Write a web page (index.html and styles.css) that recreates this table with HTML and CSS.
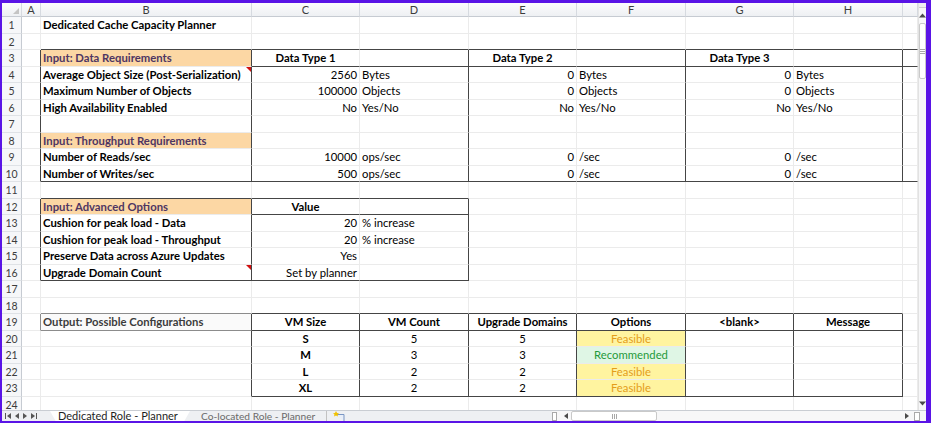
FILE: index.html
```
<!DOCTYPE html>
<html>
<head>
<meta charset="utf-8">
<title>Dedicated Cache Capacity Planner</title>
<link rel="stylesheet" href="styles.css">
</head>
<body>
<div class="frame">
<div class="excel">
  <div class="main">
    <div class="sheet">
      <table class="grid">
        <colgroup>
          <col class="w-rh"><col class="w-a"><col class="w-b"><col class="w-c"><col class="w-d"><col class="w-c"><col class="w-d"><col class="w-c"><col class="w-d"><col class="w-i">
        </colgroup>
        <thead>
          <tr class="hdr">
            <th class="corner"><svg width="6" height="6" viewBox="0 0 6 6"><polygon points="6,0 6,6 0,6" fill="#c4c4c4"/></svg></th>
            <th>A</th><th>B</th><th>C</th><th>D</th><th>E</th><th>F</th><th>G</th><th>H</th><th></th>
          </tr>
        </thead>
        <tbody>
          <tr><td class="rh">1</td><td></td><td class="bold">Dedicated Cache Capacity Planner</td><td></td><td></td><td></td><td></td><td></td><td></td><td></td></tr>
          <tr><td class="rh">2</td><td></td><td class="b"></td><td class="b"></td><td class="b"></td><td class="b"></td><td class="b"></td><td class="b"></td><td class="b"></td><td class="b"></td></tr>
          <tr><td class="rh">3</td><td class="r"></td><td class="r inp">Input: Data Requirements</td><td class="b ctr bold">Data Type 1</td><td class="b r"></td><td class="b ctr bold">Data Type 2</td><td class="b r"></td><td class="b ctr bold">Data Type 3</td><td class="b r"></td><td class="b"></td></tr>
          <tr><td class="rh">4</td><td class="r"></td><td class="r bold note-cell">Average Object Size (Post-Serialization)<span class="note"></span></td><td class="num">2560</td><td class="r">Bytes</td><td class="num">0</td><td class="r">Bytes</td><td class="num">0</td><td class="r">Bytes</td><td></td></tr>
          <tr><td class="rh">5</td><td class="r"></td><td class="r bold">Maximum Number of Objects</td><td class="num">100000</td><td class="r">Objects</td><td class="num">0</td><td class="r">Objects</td><td class="num">0</td><td class="r">Objects</td><td></td></tr>
          <tr><td class="rh">6</td><td class="r"></td><td class="r bold">High Availability Enabled</td><td class="num">No</td><td class="r">Yes/No</td><td class="num">No</td><td class="r">Yes/No</td><td class="num">No</td><td class="r">Yes/No</td><td></td></tr>
          <tr><td class="rh">7</td><td class="r"></td><td class="r"></td><td></td><td class="r"></td><td></td><td class="r"></td><td></td><td class="r"></td><td></td></tr>
          <tr><td class="rh">8</td><td class="r"></td><td class="r inp">Input: Throughput Requirements</td><td></td><td class="r"></td><td></td><td class="r"></td><td></td><td class="r"></td><td></td></tr>
          <tr><td class="rh">9</td><td class="r"></td><td class="r bold">Number of Reads/sec</td><td class="num">10000</td><td class="r">ops/sec</td><td class="num">0</td><td class="r">/sec</td><td class="num">0</td><td class="r">/sec</td><td></td></tr>
          <tr><td class="rh">10</td><td class="r"></td><td class="r b bold">Number of Writes/sec</td><td class="b num">500</td><td class="b r">ops/sec</td><td class="b num">0</td><td class="b r">/sec</td><td class="b num">0</td><td class="b r">/sec</td><td class="b"></td></tr>
          <tr><td class="rh">11</td><td></td><td class="b"></td><td class="b"></td><td class="b"></td><td></td><td></td><td></td><td></td><td></td></tr>
          <tr><td class="rh">12</td><td class="r"></td><td class="r inp">Input: Advanced Options</td><td class="b ctr bold">Value</td><td class="b r"></td><td></td><td></td><td></td><td></td><td></td></tr>
          <tr><td class="rh">13</td><td class="r"></td><td class="r bold">Cushion for peak load - Data</td><td class="num">20</td><td class="r">% increase</td><td></td><td></td><td></td><td></td><td></td></tr>
          <tr><td class="rh">14</td><td class="r"></td><td class="r bold">Cushion for peak load - Throughput</td><td class="num">20</td><td class="r">% increase</td><td></td><td></td><td></td><td></td><td></td></tr>
          <tr><td class="rh">15</td><td class="r"></td><td class="r bold">Preserve Data across Azure Updates</td><td class="num">Yes</td><td class="r"></td><td></td><td></td><td></td><td></td><td></td></tr>
          <tr><td class="rh">16</td><td class="r"></td><td class="r b bold note-cell">Upgrade Domain Count<span class="note"></span></td><td class="b num">Set by planner</td><td class="b r"></td><td></td><td></td><td></td><td></td><td></td></tr>
          <tr><td class="rh">17</td><td></td><td></td><td></td><td></td><td></td><td></td><td></td><td></td><td></td></tr>
          <tr><td class="rh">18</td><td></td><td class="bg"></td><td class="b"></td><td class="b"></td><td class="b"></td><td class="b"></td><td class="b"></td><td class="b"></td><td></td></tr>
          <tr><td class="rh">19</td><td class="rg"></td><td class="bg r out">Output: Possible Configurations</td><td class="b r ctr bold">VM Size</td><td class="b r ctr bold">VM Count</td><td class="b r ctr bold">Upgrade Domains</td><td class="b r ctr bold">Options</td><td class="b r ctr bold">&lt;blank&gt;</td><td class="b r ctr bold">Message</td><td></td></tr>
          <tr><td class="rh">20</td><td></td><td class="r"></td><td class="r ctr bold">S</td><td class="r ctr">5</td><td class="r ctr">5</td><td class="r ctr feas">Feasible</td><td class="r"></td><td class="r"></td><td></td></tr>
          <tr><td class="rh">21</td><td></td><td class="r"></td><td class="r ctr bold">M</td><td class="r ctr">3</td><td class="r ctr">3</td><td class="r ctr rec">Recommended</td><td class="r"></td><td class="r"></td><td></td></tr>
          <tr><td class="rh">22</td><td></td><td class="r"></td><td class="r ctr bold">L</td><td class="r ctr">2</td><td class="r ctr">2</td><td class="r ctr feas">Feasible</td><td class="r"></td><td class="r"></td><td></td></tr>
          <tr><td class="rh">23</td><td></td><td class="r"></td><td class="b r ctr bold">XL</td><td class="b r ctr">2</td><td class="b r ctr">2</td><td class="b r ctr feas">Feasible</td><td class="b r"></td><td class="b r"></td><td></td></tr>
          <tr><td class="rh">24</td><td></td><td></td><td></td><td></td><td></td><td></td><td></td><td></td><td></td></tr>
        </tbody>
      </table>
    </div>
    <div class="vscroll">
      <div class="vsplit"></div>
      <div class="varrow"><svg width="7" height="5" viewBox="0 0 7 5"><polygon points="3.5,0.5 7,4.5 0,4.5" fill="#4a4a4a"/></svg></div>
      <div class="vthumb"><svg width="5" height="5" viewBox="0 0 5 5"><path d="M0 0.5H5M0 2.5H5M0 4.5H5" stroke="#a8a8a8" stroke-width="1"/></svg></div>
      <div class="vtrack"></div>
      <div class="varrow down"><svg width="7" height="5" viewBox="0 0 7 5"><polygon points="0,0.5 7,0.5 3.5,4.5" fill="#4a4a4a"/></svg></div>
    </div>
  </div>
  <div class="tabbar">
    <div class="nav">
      <svg width="6" height="6" viewBox="0 0 6 6"><rect x="0" y="0" width="1" height="6" fill="#555"/><polygon points="6,0 6,6 2,3" fill="#555"/></svg>
      <svg width="4" height="6" viewBox="0 0 4 6"><polygon points="4,0 4,6 0,3" fill="#555"/></svg>
      <svg width="4" height="6" viewBox="0 0 4 6"><polygon points="0,0 0,6 4,3" fill="#555"/></svg>
      <svg width="6" height="6" viewBox="0 0 6 6"><polygon points="0,0 0,6 4,3" fill="#555"/><rect x="5" y="0" width="1" height="6" fill="#555"/></svg>
    </div>
    <div class="tab active">Dedicated Role - Planner</div>
    <div class="tab other">Co-located Role - Planner</div>
    <div class="newsheet"><svg width="14" height="10" viewBox="0 0 14 10"><path d="M4 3.5H12V10" fill="#e8eef8" stroke="#7a96c4" stroke-width="1"/><polygon points="4,0 5,2 7,2.2 5.5,3.5 6,5.5 4,4.4 2,5.5 2.5,3.5 1,2.2 3,2" fill="#f2c200"/></svg></div>
    <div class="spacer"></div>
    <div class="hscroll">
      <div class="hsplit"></div>
      <div class="harrow"><svg width="4" height="6" viewBox="0 0 4 6"><polygon points="4,0 4,6 0,3" fill="#4a4a4a"/></svg></div>
      <div class="hthumb"><svg width="5" height="5" viewBox="0 0 5 5"><path d="M0.5 0V5M2.5 0V5M4.5 0V5" stroke="#a8a8a8" stroke-width="1"/></svg></div>
      <div class="htrack"></div>
      <div class="harrow"><svg width="4" height="6" viewBox="0 0 4 6"><polygon points="0,0 0,6 4,3" fill="#4a4a4a"/></svg></div>
      <div class="hbox"></div>
    </div>
  </div>
</div>
</div>
</body>
</html>
```
FILE: styles.css
```
* { box-sizing: border-box; }
html, body { margin: 0; padding: 0; }
body {
  width: 931px;
  height: 423px;
  overflow: hidden;
  background: #5a14e6;
  font-family: Lato, "Open Sans", "Liberation Sans", sans-serif;
}
.frame {
  height: 423px;
  padding: 3px 5px 2px 2px;
}
.excel {
  background: #fff;
  height: 418px;
  display: flex;
  flex-direction: column;
  overflow: hidden;
}
.main {
  display: flex;
  height: 407px;
  flex: none;
}
.sheet {
  width: 916px;
  height: 407px;
  overflow: hidden;
}

/* ---- grid ---- */
.grid {
  border-collapse: separate;
  border-spacing: 0;
  table-layout: fixed;
  width: 916px;
  font-size: 11.3px;
  color: #000;
}
.w-rh { width: 20px; }
.w-a { width: 19px; }
.w-b { width: 211px; }
.w-c { width: 108px; }
.w-d { width: 109px; }
.w-i { width: 15px; }

.hdr { height: 14px; }
.hdr th {
  height: 14px;
  padding: 0;
  font-weight: normal;
  font-size: 11px;
  line-height: 13px;
  color: #3c3c3c;
  text-align: center;
  background: linear-gradient(#fcfcfd, #eef0f3);
  border-right: 1px solid #d6dae0;
  border-bottom: 1px solid #c6cbd2;
}
.hdr th.corner {
  text-align: right;
  vertical-align: bottom;
  padding: 0 2px 2px 0;
}
.hdr th.corner svg { display: block; margin-left: auto; }

tbody tr { height: 16.5px; }
td {
  height: 16.5px;
  padding: 1px 2px 0;
  line-height: 14px;
  white-space: nowrap;
  overflow: visible;
  vertical-align: middle;
  border-right: 1px solid #ebebeb;
  border-bottom: 1px solid #ebebeb;
}
td.rh {
  padding: 1px 0 0;
  text-align: center;
  font-size: 10.5px;
  color: #3c3c3c;
  background: #f6f7f9;
  border-right: 1px solid #c6cbd2;
  border-bottom: 1px solid #dfe2e6;
}
td.r { border-right-color: #454545; }
td.b { border-bottom-color: #454545; }
td.rg { border-right-color: #8c8c8c; }
td.bg { border-bottom-color: #8c8c8c; }

.bold { font-weight: bold; }
.ctr { text-align: center; }
.num { text-align: right; }

td.inp {
  background: #fcd7a4;
  color: #4e3562;
  font-weight: bold;
}
td.out {
  color: #3c3c3c;
  font-weight: bold;
  background: #fafafa;
}
td.feas {
  background: #fff4a0;
  color: #e49d1a;
}
td.rec {
  background: #dff6e5;
  color: #1f9a3b;
}
td.note-cell { position: relative; }
.note {
  position: absolute;
  top: 0;
  right: 0;
  width: 0;
  height: 0;
  border-top: 5px solid #d01010;
  border-left: 5px solid transparent;
}

/* ---- vertical scrollbar ---- */
.vscroll {
  width: 8px;
  height: 407px;
  display: flex;
  flex-direction: column;
  background: #f7f7f8;
  border-left: 1px solid #e2e2e2;
}
.vsplit {
  height: 5px;
  border-bottom: 1px solid #cfcfcf;
  background: #f0f0f0;
}
.varrow {
  height: 15px;
  display: flex;
  align-items: center;
  justify-content: center;
}
.varrow svg { display: block; }
.varrow.down { height: 14px; }
.vthumb {
  height: 56px;
  background: #fff;
  border: 1px solid #c9c9c9;
  border-radius: 2px;
  display: flex;
  align-items: center;
  justify-content: center;
}
.vthumb svg { display: block; }
.vtrack { flex: 1; }

/* ---- tab bar ---- */
.tabbar {
  height: 11px;
  flex: none;
  display: flex;
  align-items: stretch;
  background: #eef0f3;
  border-top: 1px solid #c9cdd3;
}
.nav {
  width: 48px;
  display: flex;
  align-items: center;
  gap: 4px;
  padding-left: 3px;
}
.nav svg { display: block; }
.tab {
  font-size: 11px;
  line-height: 10px;
  padding-top: 0;
  white-space: nowrap;
}
.tab.active {
  width: 140px;
  padding-left: 8px;
  color: #1e1e1e;
  background: #fff;
  clip-path: polygon(0 0, 100% 0, 96% 100%, 4% 100%);
}
.tab.other {
  width: 137px;
  padding-left: 11px;
  font-size: 10.2px;
  color: #6a6a6a;
  border-right: 1px solid #c2c2c2;
}
.newsheet {
  width: 24px;
  display: flex;
  align-items: center;
  justify-content: center;
}
.newsheet svg { display: block; }
.spacer { flex: 1; }
.hscroll {
  width: 374px;
  display: flex;
  align-items: center;
  background: #f7f7f8;
}
.hsplit {
  width: 5px;
  height: 9px;
  border: 1px solid #a9a9a9;
  background: #fff;
  margin-right: 4px;
}
.harrow {
  width: 10px;
  display: flex;
  justify-content: center;
}
.harrow svg { display: block; }
.hthumb {
  width: 86px;
  height: 10px;
  background: #fff;
  border: 1px solid #c9c9c9;
  border-radius: 2px;
  display: flex;
  align-items: center;
  justify-content: center;
}
.hthumb svg { display: block; }
.htrack { flex: 1; }
.hbox {
  width: 6px;
  height: 9px;
  border: 1px solid #a9a9a9;
  background: #fff;
  margin: 0 6px 0 2px;
}
```
